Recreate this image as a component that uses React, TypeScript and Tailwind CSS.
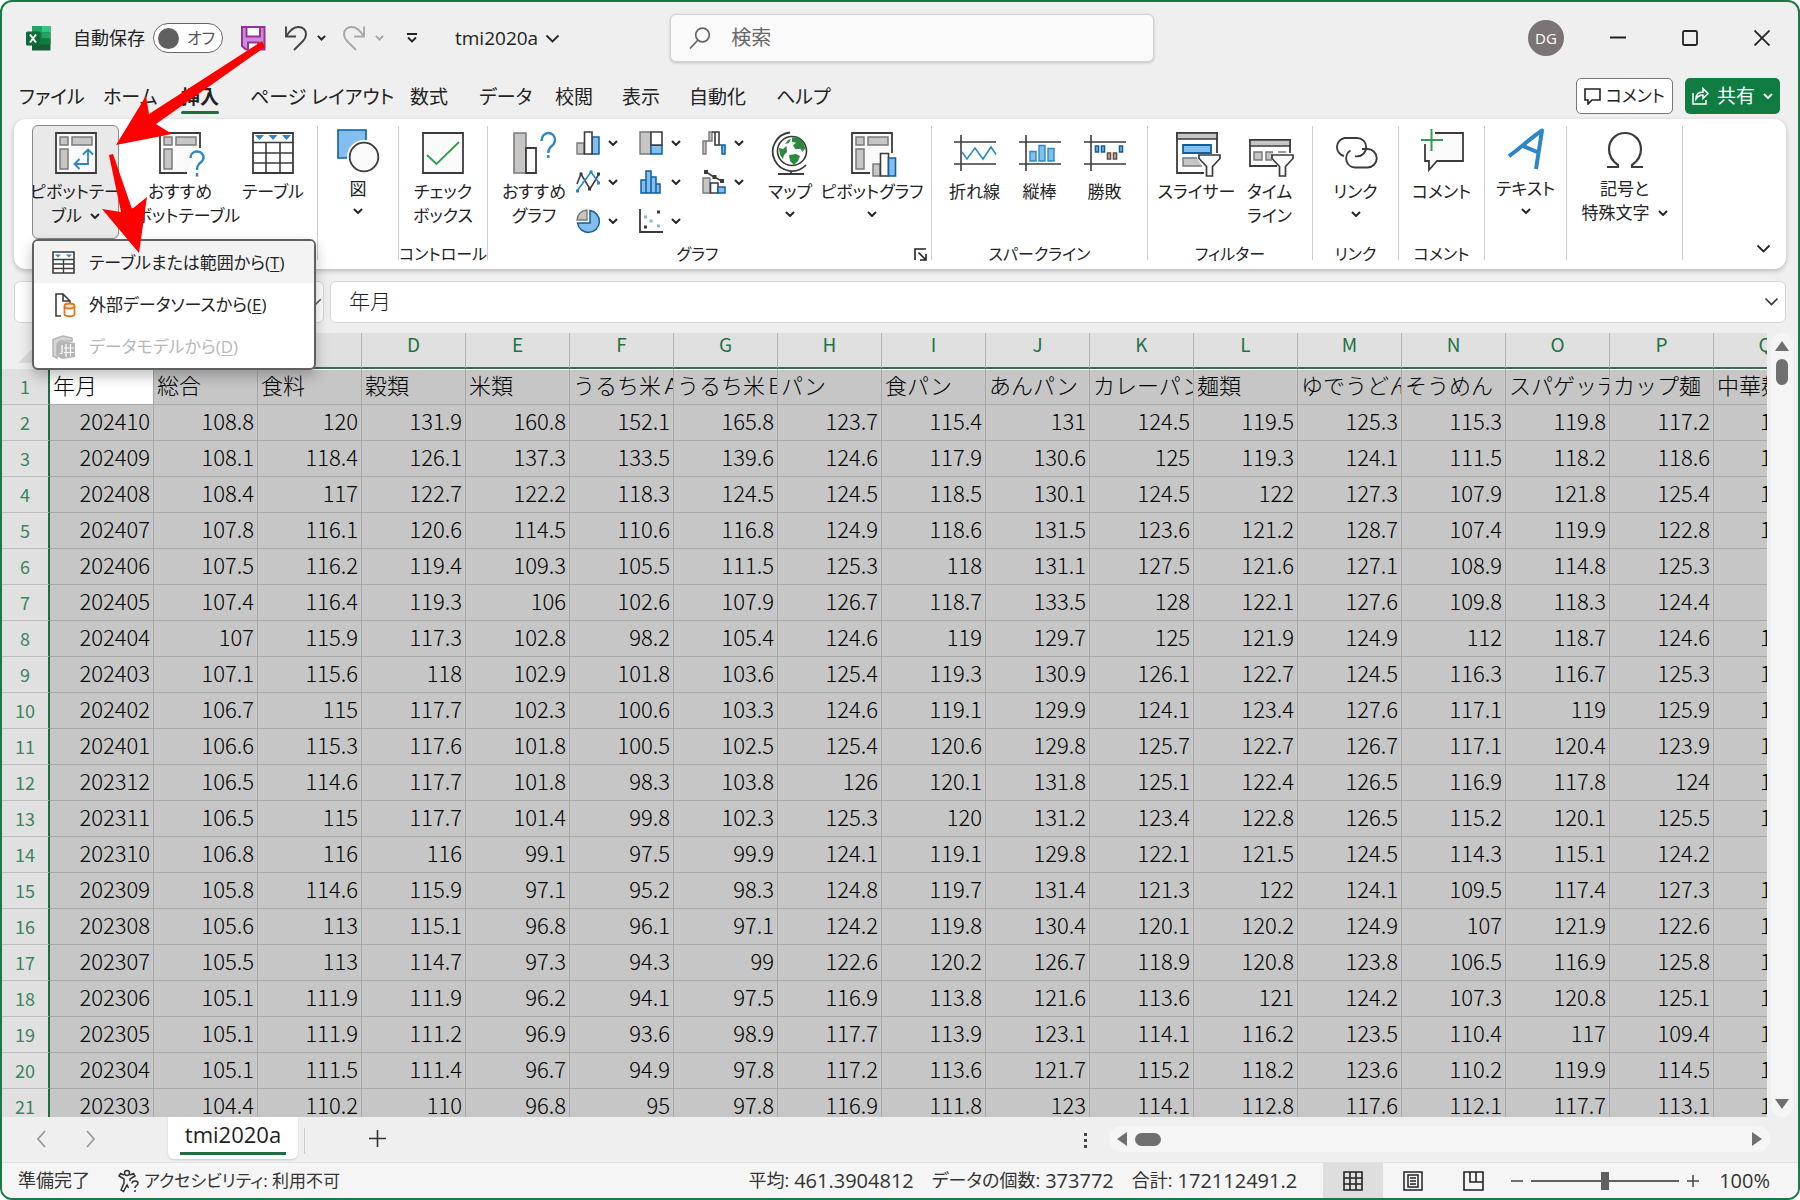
import React from "react";

const UI = "font-['Open_Sans','Noto_Sans_CJK_JP',sans-serif] [font-feature-settings:'palt']";

/* ---------- small glyphs ---------- */
function Chev({ w = 10, c = "#262626", s = 2 }: { w?: number; c?: string; s?: number }) {
  return (
    <svg width={w} height={w * 0.6} viewBox="0 0 10 6" className="shrink-0" fill="none" stroke={c} strokeWidth={(s * 10) / w}>
      <path d="M1 1l4 4 4-4" />
    </svg>
  );
}
function Svg({ w = 42, h = 42, children }: { w?: number; h?: number; children: React.ReactNode }) {
  return (
    <svg width={w} height={h} viewBox={`0 0 ${w} ${h}`} fill="none" className="shrink-0 overflow-visible">
      {children}
    </svg>
  );
}
const D = "#3b3b3b";
const B = "#2b88c4";
const LB = "#83beec";
const DB = "#0f5f9e";
const G = "#c8c6c4";
const GD = "#7a7a7a";

/* ---------- ribbon icons ---------- */
const PivotFrame = ({ cut }: { cut?: string }) => (
  <>
    <path d={cut ?? "M1 1h40v40H1z"} fill="#fafafa" stroke={D} strokeWidth="1.8" />
    <path d="M5 5h8v8H5zM17 5h20v8H17zM5 17h8v20H5z" fill={G} stroke={GD} strokeWidth="1.5" />
  </>
);
const IPivot = () => (
  <Svg>
    <PivotFrame />
    <path d="M20 32h13V18M28 22.500l5-5 5 5M24.500 27l-5 5 5 5" stroke={B} strokeWidth="1.800" />
  </Svg>
);
const IPivotRec = () => (
  <Svg>
    <PivotFrame cut="M28 41H1V1h40v15" />
    <path d="M31.500 26c0-4 3-6.500 6.500-6.500s6.500 2.500 6.500 6-3 5-4.500 6.500-2 2.500-2 6M38 41v3.500" stroke={B} strokeWidth="2.400" />
  </Svg>
);
const ITable = () => (
  <Svg>
    <path d="M1 1h40v40H1z" fill="#fff" stroke={D} strokeWidth="1.800" />
    <path d="M1 10.500h40M1 21h40M1 31h40M14 10.500V41M28 10.500V41" stroke={D} strokeWidth="1.600" />
    <path d="M3 3h9l-4.500 5zM16.500 3h9L21 8zM30 3h9l-4.500 5z" fill={B} />
  </Svg>
);
const IShapes = () => (
  <Svg>
    <path d="M1-2h28v28H1z" fill={LB} stroke={DB} strokeWidth="1.600" />
    <circle cx="27" cy="25" r="17" fill="#fff" />
    <circle cx="27" cy="25" r="14.300" fill="#fafafa" stroke={D} strokeWidth="1.800" />
  </Svg>
);
const ICheck = () => (
  <Svg>
    <path d="M1 1h40v40H1z" fill="#fafafa" stroke={D} strokeWidth="1.800" />
    <path d="M5 23l9.500 9L37 10" stroke="#2f9e4f" strokeWidth="1.800" />
  </Svg>
);
const IChartRec = () => (
  <Svg>
    <path d="M1 1h12v40H1z" fill={G} stroke={GD} strokeWidth="1.600" />
    <path d="M13 16h10v25H13z" fill="#fafafa" stroke={D} strokeWidth="1.800" />
    <path d="M28.500 9c0-4.500 3-8 6.800-8S42 4 42 8s-3 5.500-4.700 7.500-2 2.500-2 5.500M35.300 23v3" stroke={B} strokeWidth="2.400" />
  </Svg>
);
const IMap = () => (
  <Svg w={38} h={46}>
    <circle cx="21" cy="19" r="14.500" fill="#fff" stroke={D} strokeWidth="1.700" />
    <path d="M21 5.500l5-.2 5.500 4 3 7-3 3.500-2-3-5 .5-2.500-4 3-2.500-4-1zM8 16l4 1 3.500-3 .5 6-3 3-1 4-3-4zM18 23l7-1 4 2-2 5-4 4-4-4zM17 8l3-1-2 4-4 1z" fill="#2a8a3e" />
    <path d="M19 .5A19.300 19.300 0 1 0 35 33M20 38.500V42M7 42h26" stroke={D} strokeWidth="1.800" />
  </Svg>
);
const IPivotChart = () => (
  <Svg>
    <PivotFrame cut="M19 41H1V1h40v20" />
    <path d="M22 32h7v12h-7z" fill={G} stroke={GD} strokeWidth="1.500" />
    <path d="M29.500 21.500h8V44h-8z" fill="#fff" stroke={D} strokeWidth="1.600" />
    <path d="M37.500 26h7v18h-7z" fill={LB} stroke={DB} strokeWidth="1.600" />
  </Svg>
);
const SparkAxis = () => <path d="M0 10h42M0 32h42M7 3v36" stroke={D} strokeWidth="1.600" />;
const ISparkLine = () => (
  <Svg>
    <SparkAxis />
    <path d="M8 20l5 7 8-11 8 11 8-12 5 7.500" stroke={B} strokeWidth="1.600" />
  </Svg>
);
const ISparkCol = () => (
  <Svg>
    <SparkAxis />
    <path d="M11 19.500h6V29h-6zM20 13.500h6V29h-6zM29 16.500h6V29h-6z" fill={LB} stroke={B} strokeWidth="1.400" />
  </Svg>
);
const ISparkWin = () => (
  <Svg>
    <SparkAxis />
    <path d="M11.500 14h3v6h-3zM17.500 14h3v6h-3zM35.500 14h3v6h-3z" fill={LB} stroke={DB} strokeWidth="1.600" />
    <path d="M23.500 21h3v6h-3zM29.500 21h3v6h-3z" fill={G} stroke="#5b4a42" strokeWidth="1.600" />
  </Svg>
);
const Funnel = () => (
  <path d="M23 23h21v3.500l-7.500 8V44h-6v-9.500L23 26.500z" fill="#fafafa" stroke={D} strokeWidth="1.700" />
);
const ISlicer = () => (
  <Svg>
    <path d="M28 41H1V1h40v20" fill="#fff" stroke={D} strokeWidth="1.800" />
    <path d="M1 1h40v6H1z" fill={G} stroke={D} strokeWidth="1.600" />
    <path d="M7 13h28v8H7z" fill={LB} stroke={DB} strokeWidth="1.800" />
    <path d="M21 26H7v8h19" fill={G} stroke={GD} strokeWidth="1.500" />
    <Funnel />
  </Svg>
);
const ITimeline = () => (
  <Svg>
    <path d="M28 34H1V8h40v13" fill="#fff" stroke={D} strokeWidth="1.800" />
    <path d="M1 8h40v6H1z" fill={G} stroke={D} strokeWidth="1.600" />
    <path d="M5 20h8v8H5zM23 28h-6v-8h7M29 20h8" fill={G} stroke={GD} strokeWidth="1.500" />
    <Funnel />
  </Svg>
);
const ILink = () => (
  <Svg>
    <path d="M9 24A9.200 9.200 0 0 1 9.500 6H22a9.200 9.200 0 0 1 0 18.400h-2" stroke={D} strokeWidth="1.900" />
    <path d="M27 17h5.500a9.200 9.200 0 0 1 0 18.500H20.500a9.200 9.200 0 0 1-5-17" stroke={D} strokeWidth="1.900" />
  </Svg>
);
const IComment = () => (
  <Svg>
    <path d="M4 12v17h4v9l8-9h26V1H14" fill="#fafafa" stroke={D} strokeWidth="1.800" />
    <path d="M10.500-3v22M0 8h22" stroke="#2f9e4f" strokeWidth="2" />
  </Svg>
);
const ITextA = () => (
  <Svg>
    <path d="M4 24C13 18 28 4 37-1.500L31 37M18 14l14 6" stroke={B} strokeWidth="4" strokeLinejoin="round" />
  </Svg>
);
const IOmega = () => (
  <Svg>
    <path d="M3 35h11v-2C8 29 5 23 5 17 5 8 12 1 21 1s16 7 16 16c0 6-3 12-9 16v2h11" stroke={D} strokeWidth="2.200" />
  </Svg>
);

/* small chart icons, 24 x 24 */
const smallIcons: React.ReactNode[] = [
  <Svg key="col" w={24} h={24}>
    <path d="M1 12h7v11H1z" fill={G} stroke={GD} strokeWidth="1.400" />
    <path d="M16 6h7v17h-7z" fill={LB} stroke={DB} strokeWidth="1.500" />
    <path d="M8.500 1H16v22H8.500z" fill="#fff" stroke={D} strokeWidth="1.600" />
  </Svg>,
  <Svg key="tree" w={24} h={24}>
    <path d="M1 1h11v22H1z" fill={G} stroke={GD} strokeWidth="1.400" />
    <path d="M12 14h11v9H12z" fill={LB} stroke={DB} strokeWidth="1.500" />
    <path d="M12 1h11v13H12z" fill="#fff" stroke={D} strokeWidth="1.600" />
  </Svg>,
  <Svg key="fall" w={24} h={24}>
    <path d="M1 10h3v13H1zM7 1h3v9H7z" fill={G} stroke={GD} strokeWidth="1.400" />
    <path d="M4 10h3" stroke={GD} strokeWidth="1.400" />
    <path d="M10 1h7v13h-4V1" fill="#fff" stroke={D} strokeWidth="1.600" />
    <path d="M17 14h3M20 14h3v9h-3z" fill={LB} stroke={DB} strokeWidth="1.500" />
  </Svg>,
  <Svg key="line" w={24} h={24}>
    <path d="M1 14L5 4l9 15 9-15" stroke={D} strokeWidth="1.600" />
    <path d="M1 21L15 2l8 11" stroke={B} strokeWidth="1.600" />
    <path d="M3.500 2.500h3v3h-3zM12 17.500h3v3h-3zM21 2.500h3v3h-3z" fill={D} />
    <path d="M0 19.500h3v3H0zM13.500.5h3v3h-3zM21 11.500h3v3h-3z" fill={B} />
  </Svg>,
  <Svg key="hist" w={24} h={24}>
    <path d="M2 10h5v13H2zM7 1h5v22H7zM12 7h5v16h-5zM17 14h4v9h-4z" fill={LB} stroke={DB} strokeWidth="1.500" />
  </Svg>,
  <Svg key="combo" w={24} h={24}>
    <path d="M1 8h7v15H1z" fill={G} stroke={GD} strokeWidth="1.400" />
    <path d="M8.500 13H16v10H8.500z" fill="#fff" stroke={D} strokeWidth="1.600" />
    <path d="M16 17h7v6h-7z" fill={LB} stroke={DB} strokeWidth="1.500" />
    <path d="M4 2l8 5 8 4" stroke={D} strokeWidth="1.500" />
    <path d="M2 0h4v4H2zM10.500 5h4v4h-4zM18 9h4v4h-4z" fill={D} />
  </Svg>,
  <Svg key="pie" w={24} h={24}>
    <path d="M14 1.500A11 11 0 1 1 1.500 14H14z" fill={LB} stroke={DB} strokeWidth="1.500" />
    <path d="M11 1v10H1A10.500 10.500 0 0 1 11 1z" fill={G} stroke={GD} strokeWidth="1.400" />
  </Svg>,
  <Svg key="scatter" w={24} h={24}>
    <path d="M1 0v23h23" stroke={D} strokeWidth="1.800" />
    <path d="M18 1.500h3v3h-3zM5 16.500h3v3H5z" fill={D} />
    <path d="M5 6.500h3v3H5zM10.500 10.500h3v3h-3zM18 15.500h3v3h-3z" fill="#85b6d8" />
  </Svg>,
];

/* ---------- ribbon ---------- */
type BtnProps = { icon: React.ReactNode; lines: string[]; w: string; chev?: "inline" | "below"; active?: boolean; tight?: boolean };
function Btn({ icon, lines, w, chev, active, tight }: BtnProps) {
  return (
    <button
      className={`${w} ${active ? "rounded-md bg-[#e9e9e9] outline outline-1 -outline-offset-1 outline-[#8a8a8a]" : ""} flex h-[114px] shrink-0 flex-col items-center pt-[7px]`}
    >
      <span className={`${tight ? "mb-[3px]" : "mb-[6px]"} flex h-[42px] items-start justify-center`}>{icon}</span>
      {lines.map((l, i) => (
        <span key={l} className="flex h-6 items-center gap-2 text-[17px] leading-6 whitespace-nowrap">
          {l}
          {chev === "inline" && i === lines.length - 1 && <Chev />}
        </span>
      ))}
      {chev === "below" && (
        <span className="flex h-5 items-center">
          <Chev />
        </span>
      )}
    </button>
  );
}
function Group({ w, label, children, extra, pad = "justify-center" }: { w: string; label?: string; pad?: string; extra?: React.ReactNode; children: React.ReactNode }) {
  return (
    <div className={`${w} flex shrink-0 pt-[6px]`}>
      <div className="flex min-w-0 flex-1 flex-col">
        <div className={`flex h-[117px] ${pad}`}>{children}</div>
        <div className={`relative h-6 text-center text-[16px] leading-6 whitespace-nowrap ${extra ? "pr-6" : ""}`}>
          {label}
          {extra}
        </div>
      </div>
      <div className="mt-px mb-[9px] w-px bg-[#cfcfcf]" />
    </div>
  );
}

function Ribbon() {
  return (
    <div className="mx-[12px] flex h-[150px] rounded-xl bg-white shadow-[0_2px_5px_rgba(0,0,0,0.22)]">
      <Group w="w-[304px]" pad="pl-[18px]">
        <Btn w="w-[87px]" icon={<IPivot />} lines={["ピボットテー", "ブル"]} chev="inline" active />
        <Btn w="w-[122px]" icon={<IPivotRec />} lines={["おすすめ", "ピボットテーブル"]} />
        <Btn w="w-[64px]" icon={<ITable />} lines={["テーブル"]} />
      </Group>
      <Group w="w-[81px]">
        <Btn w="w-[60px]" icon={<IShapes />} lines={["図"]} chev="below" tight />
      </Group>
      <Group w="w-[89px]" label="コントロール">
        <Btn w="w-[80px]" icon={<ICheck />} lines={["チェック", "ボックス"]} />
      </Group>
      <Group
        w="w-[444px]"
        pad="pl-3"
        label="グラフ"
        extra={
          <button aria-label="グラフの詳細" className="absolute right-1 bottom-[5px]">
            <svg width="13" height="13" viewBox="0 0 13 13" fill="none" stroke="#222" strokeWidth="1.600">
              <path d="M1 12V1h11M4.500 4.500l7 7M12 6v6H6" />
            </svg>
          </button>
        }
      >
        <Btn w="w-[68px]" icon={<IChartRec />} lines={["おすすめ", "グラフ"]} />
        <div className="ml-2 grid h-[117px] shrink-0 grid-cols-[63px_63px_63px] grid-rows-3">
          {smallIcons.map((ic, i) => (
            <button key={i} aria-label={`グラフ ${i + 1}`} className="flex items-center gap-2 pb-[3px]">
              {ic}
              <Chev />
            </button>
          ))}
        </div>
        <Btn w="w-[50px]" icon={<IMap />} lines={["マップ"]} chev="below" />
        <Btn w="w-[114px]" icon={<IPivotChart />} lines={["ピボットグラフ"]} chev="below" />
      </Group>
      <Group w="w-[216px]" pad="pl-[10px]" label="スパークライン">
        <Btn w="w-[65px]" icon={<ISparkLine />} lines={["折れ線"]} />
        <Btn w="w-[65px]" icon={<ISparkCol />} lines={["縦棒"]} />
        <Btn w="w-[65px]" icon={<ISparkWin />} lines={["勝敗"]} />
      </Group>
      <Group w="w-[165px]" pad="pl-3" label="フィルター">
        <Btn w="w-[73px]" icon={<ISlicer />} lines={["スライサー"]} />
        <Btn w="w-[73px]" icon={<ITimeline />} lines={["タイム", "ライン"]} />
      </Group>
      <Group w="w-[86px]" label="リンク">
        <Btn w="w-[70px]" icon={<ILink />} lines={["リンク"]} chev="below" />
      </Group>
      <Group w="w-[86px]" label="コメント">
        <Btn w="w-[70px]" icon={<IComment />} lines={["コメント"]} />
      </Group>
      <Group w="w-[82px]">
        <Btn w="w-[76px]" icon={<ITextA />} lines={["テキスト"]} chev="below" tight />
      </Group>
      <Group w="w-[116px]">
        <Btn w="w-[110px]" icon={<IOmega />} lines={["記号と", "特殊文字"]} chev="inline" tight />
      </Group>
      <button aria-label="リボンを折りたたむ" className="mr-[15px] mb-[16px] ml-auto self-end">
        <Chev w={15} s={1.8} />
      </button>
    </div>
  );
}

/* ---------- title bar ---------- */
function TitleBar() {
  return (
    <header className="flex h-[72px] items-center pr-5 pl-6">
      <svg width="25" height="25" viewBox="0 0 25 25" className="shrink-0">
        <path d="M6 0h18.500v24.500H6z" fill="#185c37" />
        <path d="M6 0h9.500v12.500H6z" fill="#21a366" />
        <path d="M15.500 0h9v6.500h-9z" fill="#33c481" />
        <path d="M15.500 6.500h9v6h-9z" fill="#21a366" />
        <path d="M6 6.500h9.500v12H6z" fill="#107c41" />
        <path d="M15.500 12.500h9V18.500h-9z" fill="#107c41" />
        <rect y="5.500" width="14" height="14" rx="1.500" fill="#0f6b38" />
        <path d="M4 8.500l6 8M10 8.500l-6 8" stroke="#fff" strokeWidth="2" />
      </svg>
      <span className="ml-[22px] text-[18px] whitespace-nowrap">自動保存</span>
      <button
        role="switch"
        aria-checked="false"
        aria-label="自動保存"
        className="ml-2 flex h-[30px] w-[70px] shrink-0 items-center gap-2 rounded-full border border-[#666] bg-white pl-1 text-[16px] text-[#555]"
      >
        <span className="size-[21px] rounded-full bg-[#606060]" />
        オフ
      </button>
      <button aria-label="保存" className="ml-[18px]">
        <svg width="25" height="25" viewBox="0 0 25 25" fill="#fff" stroke="#94349a" strokeWidth="2">
          <path d="M1 1h22.500v22.500H5L1 20z" fill="#d28ad8" />
          <path d="M5.500 1h13.500v9.500H5.500zM7 23.500v-7h10.500v7" />
        </svg>
      </button>
      <button aria-label="元に戻す" className="ml-[18px] flex items-center gap-[9px]">
        <svg width="24" height="26" viewBox="0 0 24 26" fill="none" stroke="#444" strokeWidth="1.900">
          <path d="M2 1.500v10h10M2.500 11C6 5 10 2 14.500 2 19 2 22 5 22 9c0 3-1 5-3.500 7.500L10 25" />
        </svg>
        <Chev w={9} />
      </button>
      <button aria-label="やり直し" className="ml-4 flex items-center gap-[9px]">
        <svg width="24" height="26" viewBox="0 0 24 26" fill="none" stroke="#a8a8a8" strokeWidth="1.900">
          <path d="M22 1.500v10H12M21.500 11C18 5 14 2 9.500 2 5 2 2 5 2 9c0 3 1 5 3.500 7.500L14 25" />
        </svg>
        <Chev w={9} c="#a8a8a8" />
      </button>
      <button aria-label="クイック アクセス ツール バーのカスタマイズ" className="ml-[22px]">
        <svg width="12" height="10" viewBox="0 0 12 10" fill="none" stroke="#222" strokeWidth="1.800">
          <path d="M1 1h10M2 4.500l4 4 4-4" />
        </svg>
      </button>
      <button className="ml-[37px] flex items-center gap-[7px] text-[19px]">
        tmi2020a <Chev w={15} s={1.8} />
      </button>
      <label className="mr-auto ml-[110px] flex h-[48px] w-[484px] shrink items-center rounded-md border border-[#d2d2d2] bg-[#fafafa] pl-[18px] shadow-[0_1px_3px_rgba(0,0,0,0.2)]">
        <svg width="22" height="23" viewBox="0 0 22 23" fill="none" stroke="#666" strokeWidth="1.700" className="shrink-0">
          <circle cx="13.500" cy="8" r="6.800" />
          <path d="M9 13L1 21.500" />
        </svg>
        <input
          aria-label="検索"
          placeholder="検索"
          className="ml-5 min-w-0 flex-1 bg-transparent text-[20px] outline-none placeholder:text-[#666]"
        />
      </label>
      <span className="flex size-9 shrink-0 items-center justify-center rounded-full bg-[#7a7574] text-[15px] text-white">DG</span>
      <div className="ml-[46px] flex items-center gap-[56px]">
        <button aria-label="最小化">
          <svg width="16" height="16" stroke="#222" strokeWidth="1.800">
            <path d="M0 7.500h16" />
          </svg>
        </button>
        <button aria-label="最大化">
          <svg width="16" height="16" fill="none" stroke="#222" strokeWidth="1.800">
            <rect x="1" y="1" width="14" height="14" rx="1.500" />
          </svg>
        </button>
        <button aria-label="閉じる">
          <svg width="16" height="16" stroke="#222" strokeWidth="1.800">
            <path d="M.5.5l15 15M15.500.5l-15 15" />
          </svg>
        </button>
      </div>
      <span className="w-[8px]" />
    </header>
  );
}

const tabs: [string, string][] = [
  ["ファイル", "w-[84px]"],
  ["ホーム", "w-[78px]"],
  ["挿入", "w-[69px]"],
  ["ページ レイアウト", "w-[160px]"],
  ["数式", "w-[69px]"],
  ["データ", "w-[76px]"],
  ["校閲", "w-[67px]"],
  ["表示", "w-[67px]"],
  ["自動化", "w-[87px]"],
  ["ヘルプ", "w-[60px]"],
];
function TabRow() {
  return (
    <div className="flex h-[45px] items-center pr-[18px] pl-[17px]">
      <nav className="flex">
        {tabs.map(([t, w]) =>
          t === "挿入" ? (
            <button key={t} className={`${w} flex flex-col items-start text-[19px] leading-[30px] font-bold whitespace-nowrap`}>
              <span className="relative">
                {t}
                <span className="absolute inset-x-0 -bottom-[2px] h-[3px] rounded bg-[#1e6e42]" />
              </span>
            </button>
          ) : (
            <button key={t} className={`${w} text-left text-[19px] leading-[30px] whitespace-nowrap`}>
              {t}
            </button>
          ),
        )}
      </nav>
      <button className="mb-px ml-auto flex h-9 items-center gap-[5px] rounded-[5px] border border-[#777] bg-white px-[7px] text-[17px] whitespace-nowrap">
        <svg width="17" height="17" viewBox="0 0 17 17" fill="none" stroke="#222" strokeWidth="1.600">
          <path d="M1 1h15v11H8l-4 4v-4H1z" />
        </svg>
        コメント
      </button>
      <button className="mb-px ml-3 flex h-9 items-center gap-2 rounded-[5px] bg-[#107c41] px-[7px] text-[19px] whitespace-nowrap text-white">
        <svg width="17" height="18" viewBox="0 0 17 18" fill="none" stroke="#fff" strokeWidth="1.500">
          <path d="M1 6v11h13v-4M4 12c0-5 3-7 7-7V1.500l5 5-5 5V8C8 8 6 9 4 12z" />
        </svg>
        共有
        <Chev w={10} c="#fff" />
      </button>
    </div>
  );
}

/* ---------- grid ---------- */
const letters = "ABCDEFGHIJKLMNOPQ".split("");
const heads = ["年月", "総合", "食料", "穀類", "米類", "うるち米Ａ", "うるち米Ｂ", "パン", "食パン", "あんパン", "カレーパン", "麺類", "ゆでうどん", "そうめん", "スパゲッティ", "カップ麺", "中華麺"];
const data = `202410 108.8 120 131.9 160.8 152.1 165.8 123.7 115.4 131 124.5 119.5 125.3 115.3 119.8 117.2 1
202409 108.1 118.4 126.1 137.3 133.5 139.6 124.6 117.9 130.6 125 119.3 124.1 111.5 118.2 118.6 1
202408 108.4 117 122.7 122.2 118.3 124.5 124.5 118.5 130.1 124.5 122 127.3 107.9 121.8 125.4 1
202407 107.8 116.1 120.6 114.5 110.6 116.8 124.9 118.6 131.5 123.6 121.2 128.7 107.4 119.9 122.8 1
202406 107.5 116.2 119.4 109.3 105.5 111.5 125.3 118 131.1 127.5 121.6 127.1 108.9 114.8 125.3
202405 107.4 116.4 119.3 106 102.6 107.9 126.7 118.7 133.5 128 122.1 127.6 109.8 118.3 124.4
202404 107 115.9 117.3 102.8 98.2 105.4 124.6 119 129.7 125 121.9 124.9 112 118.7 124.6 1
202403 107.1 115.6 118 102.9 101.8 103.6 125.4 119.3 130.9 126.1 122.7 124.5 116.3 116.7 125.3 1
202402 106.7 115 117.7 102.3 100.6 103.3 124.6 119.1 129.9 124.1 123.4 127.6 117.1 119 125.9 1
202401 106.6 115.3 117.6 101.8 100.5 102.5 125.4 120.6 129.8 125.7 122.7 126.7 117.1 120.4 123.9 1
202312 106.5 114.6 117.7 101.8 98.3 103.8 126 120.1 131.8 125.1 122.4 126.5 116.9 117.8 124 1
202311 106.5 115 117.7 101.4 99.8 102.3 125.3 120 131.2 123.4 122.8 126.5 115.2 120.1 125.5 1
202310 106.8 116 116 99.1 97.5 99.9 124.1 119.1 129.8 122.1 121.5 124.5 114.3 115.1 124.2
202309 105.8 114.6 115.9 97.1 95.2 98.3 124.8 119.7 131.4 121.3 122 124.1 109.5 117.4 127.3 1
202308 105.6 113 115.1 96.8 96.1 97.1 124.2 119.8 130.4 120.1 120.2 124.9 107 121.9 122.6 1
202307 105.5 113 114.7 97.3 94.3 99 122.6 120.2 126.7 118.9 120.8 123.8 106.5 116.9 125.8 1
202306 105.1 111.9 111.9 96.2 94.1 97.5 116.9 113.8 121.6 113.6 121 124.2 107.3 120.8 125.1 1
202305 105.1 111.9 111.2 96.9 93.6 98.9 117.7 113.9 123.1 114.1 116.2 123.5 110.4 117 109.4 1
202304 105.1 111.5 111.4 96.7 94.9 97.8 117.2 113.6 121.7 115.2 118.2 123.6 110.2 119.9 114.5 1
202303 104.4 110.2 110 96.8 95 97.8 116.9 111.8 123 114.1 112.8 117.6 112.1 117.7 113.1 1`
  .split("\n")
  .map((r) => r.split(" "));

function Sheet() {
  return (
    <div className="min-w-0 flex-1 overflow-hidden">
      <table className="w-[1816px] table-fixed border-separate border-spacing-0 font-['Noto_Sans_CJK_JP',sans-serif] [font-feature-settings:normal]">
        <colgroup>
          <col className="w-[48px]" />
          {letters.map((l) => (
            <col key={l} className="w-[104px]" />
          ))}
        </colgroup>
        <thead>
          <tr>
            <th className="h-9 p-0">
              <svg width="32" height="32" viewBox="0 0 32 32" className="ml-3">
                <path d="M28 4v24H4z" fill="#dcdcdc" />
              </svg>
            </th>
            {letters.map((l) => (
              <th key={l} className="h-9 border-r border-b-2 border-r-[#b4b4b4] border-b-[#3a6b50] bg-[#e0e0e0] p-0 align-top">
                <div className="h-[34px] text-[19px] leading-[22px] font-normal text-[#1f7246]">{l}</div>
              </th>
            ))}
          </tr>
        </thead>
        <tbody>
          <tr>
            <th className="h-9 border-r-2 border-b border-r-[#1e6e42] border-b-[#bdbdbd] bg-[#e0e0e0] p-0 text-[18px] font-normal text-[#3c8460]">
              <div className="h-[35px] leading-[35px]">1</div>
            </th>
            {heads.map((h, i) => (
              <td
                key={h}
                className={`h-9 max-w-[104px] border-r border-b border-[#a8a8a8] p-0 ${i === 0 ? "bg-white" : "bg-[#c6c6c6]"}`}
              >
                <div className="h-[35px] overflow-hidden pl-[3px] text-[22px] leading-[31px] font-light whitespace-nowrap text-black shadow-[inset_0_1px_0_#fff]">
                  {h}
                </div>
              </td>
            ))}
          </tr>
          {data.map((r, ri) => (
            <tr key={ri}>
              <th className="h-9 border-r-2 border-b border-r-[#1e6e42] border-b-[#bdbdbd] bg-[#e0e0e0] p-0 text-[18px] font-normal text-[#3c8460]">
                <div className="h-[35px] leading-[35px]">{ri + 2}</div>
              </th>
              {letters.map((l, i) => (
                <td key={l} className="h-9 border-r border-b border-[#a8a8a8] bg-[#c6c6c6] p-0">
                  <div
                    className={`h-[35px] overflow-hidden text-[22px] leading-[31px] font-light whitespace-nowrap text-black ${i === 16 ? "pl-[46px] text-left" : "pr-[3px] text-right"}`}
                  >
                    {r[i]}
                  </div>
                </td>
              ))}
            </tr>
          ))}
        </tbody>
      </table>
    </div>
  );
}

/* ---------- dropdown menu ---------- */
const menu = [
  {
    t: "テーブルまたは範囲から",
    k: "T",
    icon: (
      <Svg w={24} h={24}>
        <path d="M1 1h21v21H1z" fill="#fff" stroke={D} strokeWidth="1.600" />
        <path d="M1 8.500h21M1 13h21M1 17.500h21M11.500 8.500V22" stroke={D} strokeWidth="1.400" />
        <path d="M3 3.500h6l-3 3zM14 3.500h6l-3 3z" fill={B} />
      </Svg>
    ),
  },
  {
    t: "外部データソースから",
    k: "E",
    icon: (
      <Svg w={24} h={24}>
        <path d="M9 23H4V1h7l7 7v2M11 1v7h7" fill="none" stroke={D} strokeWidth="1.600" />
        <path d="M12.500 13v8c0 3 10 3 10 0v-8" fill="#fff" stroke="#e07a20" strokeWidth="1.800" />
        <ellipse cx="17.500" cy="13" rx="5" ry="2.500" fill="#fbe3c8" stroke="#e07a20" strokeWidth="1.800" />
      </Svg>
    ),
  },
  {
    t: "データモデルから",
    k: "D",
    disabled: true,
    icon: (
      <Svg w={24} h={24}>
        <path d="M1 4.500L11 1l9 2v3H8l-3 3v14l-4-2z" fill="#d6d6d6" stroke="#b5b5b5" strokeWidth="1.500" />
        <path d="M5 8l5-2 13 2v14l-13 2-5-3z" fill="#b5b5b5" />
        <path d="M14 9v13M18.500 9v12M12 13h10M12 17.500h10M10 10v8.500H7.500" stroke="#fff" strokeWidth="1.200" />
      </Svg>
    ),
  },
];
function Menu() {
  return (
    <div className="absolute top-[237px] left-[30px] z-10 w-[284px] overflow-hidden rounded-md border-2 border-[#606060] bg-white pb-px shadow-[0_6px_14px_rgba(0,0,0,0.25)]">
      {menu.map((m, i) => (
        <button
          key={m.k}
          disabled={m.disabled}
          className={`flex h-[42px] w-full items-center gap-[13px] pt-px pl-[18px] text-[17px] whitespace-nowrap ${i === 0 ? "bg-[#f3f3f3]" : ""} ${m.disabled ? "text-[#b8b8b8]" : "text-[#222]"}`}
        >
          {m.icon}
          <span>
            {m.t}(<u className="underline-offset-2">{m.k}</u>)
          </span>
        </button>
      ))}
    </div>
  );
}

function Arrows() {
  return (
    <svg className="pointer-events-none absolute -top-[2px] -left-[2px] z-20" width="280" height="260" fill="#f00">
      <path d="M262 41L265 47L156 124L172 134L116 145L146 96L149 114Z" />
      <path d="M109 155L113 154L132 209L147 197L139 253L102 209L121 212Z" />
    </svg>
  );
}

/* ---------- bottom ---------- */
function SheetBar() {
  return (
    <div className="flex h-[46px] shrink-0 border-b border-[#e2e2e2]">
      <div className="mt-[13px] ml-[35px] flex h-[18px] items-center gap-10">
        {["M8 1L1 9l7 8", "M1 1l7 8-7 8"].map((d, i) => (
          <button key={d} aria-label={i ? "次のシート" : "前のシート"}>
            <svg width="9" height="18" fill="none" stroke="#9a9a9a" strokeWidth="1.800">
              <path d={d} />
            </svg>
          </button>
        ))}
      </div>
      <button className="ml-[73px] flex h-[42px] w-[130px] items-start justify-center rounded-b-md bg-white text-[22px] shadow-[0_1px_2px_rgba(0,0,0,0.15)]">
        <span className="border-b-[3px] border-[#1e6e42] px-[5px] leading-[35px] text-[#222]">tmi2020a</span>
      </button>
      <span className="mt-[11px] ml-[6px] h-[26px] w-px bg-[#ccc]" />
      <button aria-label="新しいシート" className="mb-[2px] ml-[64px]">
        <svg width="17" height="17" stroke="#333" strokeWidth="1.600">
          <path d="M8.500 0v17M0 8.500h17" />
        </svg>
      </button>
      <svg width="4" height="16" className="mt-4 mr-[21px] ml-auto" fill="#444">
        <path d="M0 0h3v3H0zM0 6h3v3H0zM0 12h3v3H0z" />
      </svg>
      <div className="mt-[9px] mr-[28px] flex h-[26px] w-[661px] items-center rounded-full bg-[#f5f5f5] px-2">
        <svg width="10" height="14" fill="#707070">
          <path d="M10 0v14L0 7z" />
        </svg>
        <span className="ml-2 h-[13px] w-[26px] rounded-full bg-[#707070]" />
        <svg width="10" height="14" fill="#707070" className="ml-auto">
          <path d="M0 0v14l10-7z" />
        </svg>
      </div>
    </div>
  );
}
const stats = [
  ["平均:", "461.3904812"],
  ["データの個数:", "373772"],
  ["合計:", "172112491.2"],
];
function StatusBar() {
  return (
    <footer className="flex h-[35px] shrink-0 items-center bg-[#f5f5f5] pl-4 text-[18px] whitespace-nowrap text-[#333]">
      <span>準備完了</span>
      <svg width="22" height="24" viewBox="0 0 22 24" className="ml-7" fill="none" stroke="#333" strokeWidth="1.500">
        <circle cx="9" cy="4" r="2.500" />
        <path d="M6 6L2.500 4.500 1 7l5 3v4l-3 7 2.500 1.500L9 16l1.500 3M12 6l3.500-1.500L17 7l-5 3v2M14 14.500c0-1.500 1-2.500 3-2.500s3 1 3 2.500c0 2-3 2-3 4.500M17 21v2" />
      </svg>
      <span className="ml-1 text-[17px]">アクセシビリティ: 利用不可</span>
      <div className="mr-[26px] ml-auto flex items-center gap-[18px]">
        {stats.map(([k, v]) => (
          <span key={k} className="flex items-center gap-[5px]">
            {k} <span className="text-[20px]">{v}</span>
          </span>
        ))}
      </div>
      <button aria-label="標準" className="flex h-full w-[60px] items-center justify-center bg-[#dedede]">
        <svg width="20" height="20" fill="none" stroke="#222" strokeWidth="1.600">
          <path d="M1 1h18v18H1zM7 1v18M13 1v18M1 7h18M1 13h18" />
        </svg>
      </button>
      <button aria-label="ページ レイアウト" className="flex w-[60px] justify-center">
        <svg width="20" height="20" fill="none" stroke="#222" strokeWidth="1.500">
          <path d="M1 1h18v18H1zM5 4h10v12H5zM7 7h6M7 10h6M7 13h6" />
        </svg>
      </button>
      <button aria-label="改ページ プレビュー" className="flex w-[60px] justify-center">
        <svg width="21" height="20" fill="none" stroke="#222" strokeWidth="1.600">
          <path d="M1 1h19v18H1zM7 1v10h13M13 1v10" />
        </svg>
      </button>
      <button aria-label="縮小" className="ml-2">
        <svg width="12" height="12" stroke="#444" strokeWidth="1.500">
          <path d="M0 6h12" />
        </svg>
      </button>
      <input
        type="range"
        aria-label="ズーム"
        defaultValue={50}
        className="mx-2 h-[18px] w-[148px] appearance-none bg-transparent [&::-webkit-slider-runnable-track]:h-[2px] [&::-webkit-slider-runnable-track]:bg-[#606060] [&::-webkit-slider-thumb]:-mt-2 [&::-webkit-slider-thumb]:h-[18px] [&::-webkit-slider-thumb]:w-2 [&::-webkit-slider-thumb]:appearance-none [&::-webkit-slider-thumb]:bg-[#606060]"
      />
      <button aria-label="拡大">
        <svg width="12" height="12" stroke="#444" strokeWidth="1.500">
          <path d="M0 6h12M6 0v12" />
        </svg>
      </button>
      <span className="mr-[28px] ml-5 text-[20px]">100%</span>
    </footer>
  );
}

export default function App() {
  return (
    <div className={`relative flex h-screen flex-col overflow-hidden rounded-[12px] border-2 border-[#1a7a47] bg-[#efefef] text-[#222] ${UI}`}>
      <TitleBar />
      <TabRow />
      <Ribbon />
      <div className="mx-3 mt-3 mb-[10px] flex gap-[6px]">
        <div className="flex h-[42px] w-[310px] items-center justify-end rounded-md border border-[#d6d6d6] bg-white pr-px">
          <Chev w={12} c="#555" s={1.6} />
        </div>
        <div className="flex h-[42px] min-w-0 flex-1 items-center rounded-md border border-[#d6d6d6] bg-white pr-[6px] pb-[2px] pl-[18px]">
          <input aria-label="数式バー" defaultValue="年月" className="min-w-0 flex-1 bg-transparent font-['Noto_Sans_CJK_JP',sans-serif] text-[21px] font-light outline-none" />
          <Chev w={15} s={1.6} c="#333" />
        </div>
      </div>
      <div className="flex min-h-0 flex-1">
        <Sheet />
        <div className="mr-[5px] ml-1 flex w-[22px] flex-col items-center rounded-full bg-[#f5f5f5] py-2">
          <svg width="14" height="10" fill="#707070">
            <path d="M7 0l7 10H0z" />
          </svg>
          <span className="mt-2 h-[26px] w-[12px] rounded-full bg-[#707070]" />
          <svg width="14" height="10" fill="#707070" className="mt-auto">
            <path d="M7 10l7-10H0z" />
          </svg>
        </div>
      </div>
      <SheetBar />
      <StatusBar />
      <Menu />
      <Arrows />
    </div>
  );
}
